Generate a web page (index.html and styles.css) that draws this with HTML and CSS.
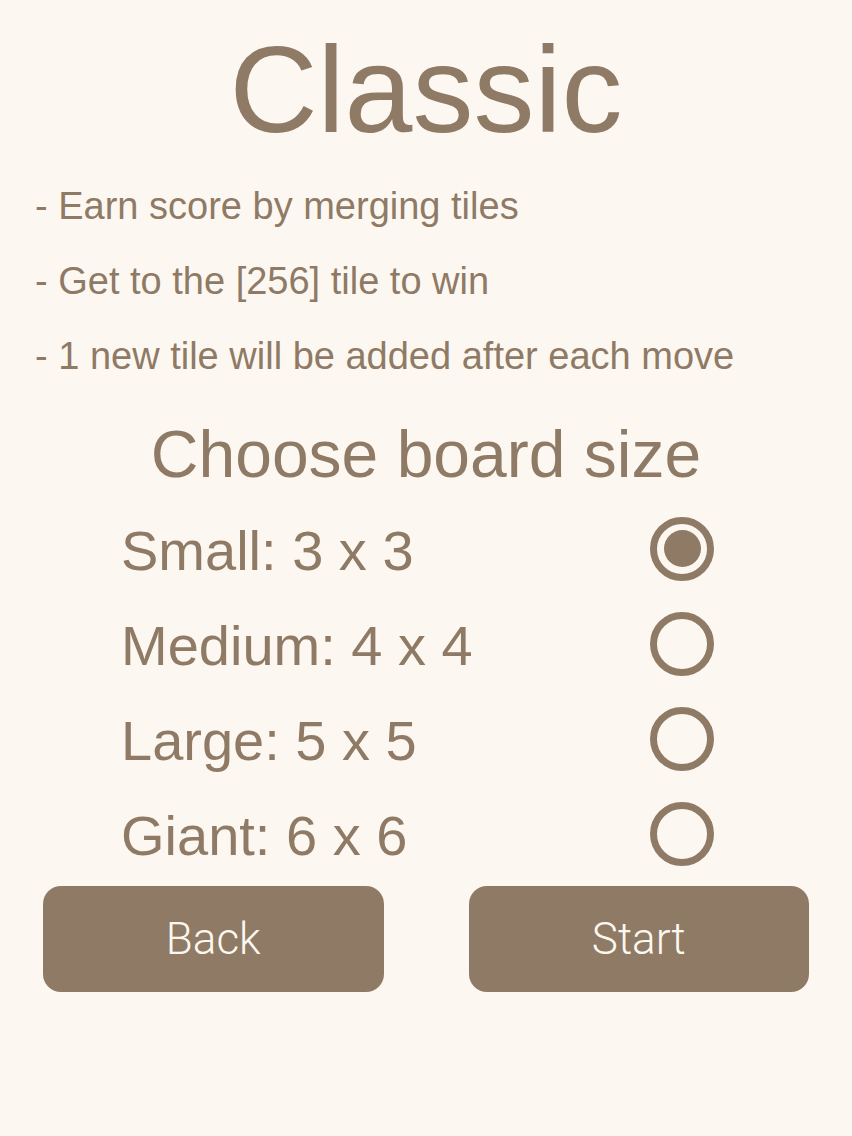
FILE: index.html
```html
<!DOCTYPE html>
<html lang="en">
<head>
<meta charset="utf-8">
<title>Classic</title>
<link rel="stylesheet" href="styles.css">
</head>
<body>
<main class="screen">
  <h1 class="title">Classic</h1>
  <ul class="rules">
    <li>- Earn score by merging tiles</li>
    <li>- Get to the [256] tile to win</li>
    <li>- 1 new tile will be added after each move</li>
  </ul>
  <h2 class="heading">Choose board size</h2>
  <div class="options">
    <label class="option"><span class="option-label">Small: 3 x 3</span><span class="radio radio-on"></span></label>
    <label class="option"><span class="option-label">Medium: 4 x 4</span><span class="radio"></span></label>
    <label class="option"><span class="option-label">Large: 5 x 5</span><span class="radio"></span></label>
    <label class="option"><span class="option-label">Giant: 6 x 6</span><span class="radio"></span></label>
  </div>
  <div class="actions">
    <button class="btn">Back</button>
    <button class="btn">Start</button>
  </div>
</main>
</body>
</html>
```
FILE: styles.css
```css
* { box-sizing: border-box; }
html, body {
  margin: 0;
  padding: 0;
  background: #fcf8f1;
}
body {
  width: 852px;
  height: 1136px;
  font-family: "Liberation Sans", Arial, sans-serif;
  color: #8f7a66;
}
.screen {
  display: flex;
  flex-direction: column;
}
.title {
  margin: 20px 0 0;
  font-size: 122px;
  font-weight: 400;
  line-height: 140px;
  text-align: center;
}
.rules {
  list-style: none;
  margin: 9px 0 0;
  padding: 0 0 0 35px;
}
.rules li {
  font-size: 38px;
  line-height: 75px;
}
.heading {
  margin: 20px 0 0;
  font-size: 66px;
  font-weight: 400;
  line-height: 80px;
  text-align: center;
}
.options {
  margin: 9px 138px 0 121px;
  display: flex;
  flex-direction: column;
}
.option {
  height: 95px;
  display: flex;
  align-items: center;
  justify-content: space-between;
}
.option-label {
  font-size: 56px;
  line-height: 95px;
}
.radio {
  width: 64px;
  height: 64px;
  border: 7px solid #8f7a66;
  border-radius: 50%;
  margin-bottom: 4px;
  display: flex;
  align-items: center;
  justify-content: center;
}
.radio-on::after {
  content: "";
  width: 37px;
  height: 37px;
  border-radius: 50%;
  background: #8f7a66;
}
.actions {
  margin-top: 3px;
  padding: 0 43px;
  display: flex;
  gap: 85px;
}
.btn {
  flex: 1;
  height: 106px;
  border: none;
  border-radius: 18px;
  background: #8f7a66;
  color: #fdf8ef;
  font-family: Roboto, "Liberation Sans", sans-serif;
  font-weight: 300;
  font-size: 44px;
  padding: 0;
}
```
